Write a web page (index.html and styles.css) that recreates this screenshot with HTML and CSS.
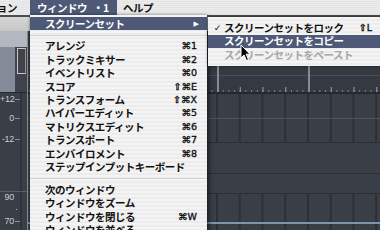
FILE: index.html
```html
<!DOCTYPE html>
<html lang="ja">
<head>
<meta charset="utf-8">
<link rel="stylesheet" href="styles.css">
</head>
<body>
<div class="screen">
  <div class="menubar">
    <span class="mb-item mb-cut">ョン</span>
    <span class="mb-item mb-active"><span>ウィンドウ</span><span class="mb-num">・1</span></span>
    <span class="mb-item mb-help">ヘルプ</span>
  </div>
  <div class="window">
    <div class="topband"></div>
    <div class="toolbar"></div>
    <div class="main">
      <div class="strip">
        <div class="strip-a"></div>
        <div class="strip-b">
          <div class="sb-left"></div>
          <div class="sb-slot"><div class="thumb"></div></div>
        </div>
        <div class="strip-c">
          <div class="scale r1"><span class="lbl">+12</span><span class="tick"></span></div>
          <div class="scale r2"><span class="lbl">0</span><span class="tick"></span></div>
          <div class="scale r3"><span class="lbl">-12</span><span class="tick"></span></div>
          <div class="hline"></div>
          <div class="scale r4"><span class="lbl">90</span></div>
          <div class="dot"></div>
          <div class="scale r5"><span class="lbl">70</span><span class="tick"></span></div>
        </div>
      </div>
      <div class="vsep"></div>
      <div class="arrange">
        <div class="arr-top"></div>
        <div class="ruler"></div>
        <div class="lane grid lane1"></div>
        <div class="lane grid lane2"></div>
        <div class="lane lane3"></div>
        <div class="lane lane4"></div>
        <div class="lane grid lane5"><div class="blue-line"></div></div>
      </div>
    </div>
  </div>

  <div class="menu">
    <div class="item hl"><span>スクリーンセット</span><span class="arrow">&#9654;</span></div>
    <div class="sep"></div>
    <div class="item"><span>アレンジ</span><span class="sc">⌘1</span></div>
    <div class="item"><span>トラックミキサー</span><span class="sc">⌘2</span></div>
    <div class="item"><span>イベントリスト</span><span class="sc">⌘0</span></div>
    <div class="item"><span>スコア</span><span class="sc">⇧⌘E</span></div>
    <div class="item"><span>トランスフォーム</span><span class="sc">⇧⌘X</span></div>
    <div class="item"><span>ハイパーエディット</span><span class="sc">⌘5</span></div>
    <div class="item"><span>マトリクスエディット</span><span class="sc">⌘6</span></div>
    <div class="item"><span>トランスポート</span><span class="sc">⌘7</span></div>
    <div class="item"><span>エンバイロメント</span><span class="sc">⌘8</span></div>
    <div class="item"><span>ステップインプットキーボード</span></div>
    <div class="sep"></div>
    <div class="item"><span>次のウィンドウ</span></div>
    <div class="item"><span>ウィンドウをズーム</span></div>
    <div class="item"><span>ウィンドウを閉じる</span><span class="sc">⌘W</span></div>
    <div class="item"><span>ウィンドウを並べる</span></div>
  </div>

  <div class="submenu">
    <div class="sitem"><span class="check">✓</span><span class="stext">スクリーンセットをロック</span><span class="sc">⇧L</span></div>
    <div class="sitem hl"><span class="check"></span><span class="stext">スクリーンセットをコピー</span></div>
    <div class="sitem dis"><span class="check"></span><span class="stext">スクリーンセットをペースト</span></div>
  </div>

  <svg class="cursor" width="12" height="18" viewBox="0 0 12 18">
    <path d="M1 1 L1 14 L4 11 L6.5 16.5 L8.5 15.6 L6.1 10.2 L10 10.2 Z" fill="#000" stroke="#fff" stroke-width="1"/>
  </svg>
</div>
</body>
</html>
```

FILE: styles.css
```css
html, body {
  margin: 0;
  padding: 0;
}
body {
  width: 380px;
  height: 230px;
  overflow: hidden;
  font-family: "Noto Sans CJK JP", sans-serif;
}
.screen {
  position: relative;
  width: 380px;
  height: 230px;
  overflow: hidden;
}

/* Menu bar */
.menubar {
  height: 15px;
  display: flex;
  align-items: stretch;
  background: repeating-linear-gradient(#ececec 0 1px, #e4e4e4 1px 2px);
  font-size: 10.5px;
  letter-spacing: -0.5px;
  font-weight: 700;
  color: #111;
  white-space: nowrap;
}
.mb-item {
  display: flex;
  align-items: center;
  line-height: 15px;
}
.mb-cut {
  margin-left: -3px;
  width: 33px;
}
.mb-active {
  width: 80px;
  padding-left: 7px;
  background: #4d5976;
  color: #fff;
}
.mb-num {
  margin-left: 6px;
}
.mb-help {
  margin-left: 6px;
}

/* App window */
.window {
  height: 215px;
  display: flex;
  flex-direction: column;
}
.topband {
  height: 2px;
  background: #4c4c4c;
}
.toolbar {
  height: 14px;
  background: linear-gradient(#d6d6d6, #c6c6c6);
}
.main {
  flex: 1;
  display: flex;
}
.strip {
  width: 27px;
  display: flex;
  flex-direction: column;
}
.strip-a {
  height: 16px;
  background: #b3b7bf;
}
.strip-b {
  height: 45px;
  display: flex;
}
.sb-left {
  flex: 1;
  background: #848b98;
}
.sb-slot {
  width: 9px;
  background: #3e424b;
  padding: 1px 1px 0 2px;
}
.thumb {
  height: 24px;
  border: 1px solid #c4c6ca;
  border-right-color: #8e9198;
}
.strip-c {
  flex: 1;
  background: linear-gradient(to right, transparent 20px, #30333a 20px 22px, transparent 22px), #3a3e46;
  border-top: 1px solid #25282d;
  font-family: "Liberation Sans", sans-serif;
  font-size: 9px;
  color: #c8ccd3;
}
.scale {
  display: flex;
  align-items: center;
  height: 12px;
}
.lbl {
  width: 14px;
  text-align: right;
  letter-spacing: -0.3px;
}
.tick {
  width: 5px;
  height: 1px;
  margin-left: 1px;
  background: #8c9099;
}
.r2 { margin-top: 7px; }
.r3 { margin-top: 9px; }
.hline {
  margin-top: 46px;
  height: 1px;
  background: #5a5e66;
}
.r4 { height: 10px; }
.dot {
  margin: 7px 0 0 16px;
  width: 1px;
  height: 1px;
  background: #b0b4ba;
}
.r5 { height: 10px; margin-top: 6px; }
.vsep {
  width: 1px;
  background: #8a8d92;
}

/* Arrange */
.arrange {
  flex: 1;
  display: flex;
  flex-direction: column;
  background: #363a42;
}
.arr-top {
  height: 35px;
}
.ruler {
  height: 26px;
  border-bottom: 2px solid #25282d;
  background-color: #353941;
  background-image:
    linear-gradient(to right, #868b93 0 2px, transparent 2px),
    linear-gradient(to right, #9a9ea6 0 1px, transparent 1px),
    linear-gradient(to right, #80848c 0 1px, transparent 1px),
    linear-gradient(#4a4e57, #4a4e57);
  background-size: 91px 100%, 22.75px 5px, 5.6875px 2px, 100% 1px;
  background-position: 7px 0, 7px 100%, 7px 100%, 0 9px;
  background-repeat: repeat-x, repeat-x, repeat-x, no-repeat;
}
.lane {
  background-color: #3a3e47;
  border-bottom: 1px solid #2b2e34;
}
.grid {
  background-image: linear-gradient(to right, #2c2f35 0 2px, transparent 2px);
  background-size: 22.75px 100%;
  background-position: 6px 0;
}
.lane1 { height: 24px; border-bottom-color: #4f535c; }
.lane2 { height: 23px; }
.lane3 { height: 30px; }
.lane4 { height: 19px; }
.lane5 { flex: 1; border-bottom: 0; }
.blue-line {
  margin-top: 28px;
  height: 2px;
  background: #7d93ae;
}

/* Main menu */
.menu {
  position: absolute;
  left: 30px;
  top: 15px;
  width: 177px;
  height: 230px;
  padding-top: 2px;
  background: repeating-linear-gradient(#f4f4f4 0 2px, #ececec 2px 4px);
  box-shadow: 0 0 3px rgba(0, 0, 0, 0.45), 3px 2px 4px rgba(0, 0, 0, 0.35);
  font-size: 10.5px;
  letter-spacing: -0.5px;
  font-weight: 700;
  color: #111;
}
.item {
  height: 13.4px;
  display: flex;
  align-items: center;
  justify-content: space-between;
  padding: 0 10px 0 15px;
  line-height: 12px;
  white-space: nowrap;
}
.item.hl {
  background: #4d5976;
  color: #fff;
}
.arrow {
  font-family: "DejaVu Sans", sans-serif;
  font-size: 7px;
  letter-spacing: 0;
  margin-right: -2px;
}
.sep {
  height: 9.4px;
  display: flex;
  align-items: center;
}
.sep::after {
  content: "";
  flex: 1;
  height: 1px;
  background: #d2d2d2;
}
.sc {
  font-family: "DejaVu Sans", sans-serif;
  font-size: 9.5px;
  font-weight: 400;
  letter-spacing: 0;
  -webkit-text-stroke: 0.35px currentColor;
  color: #111;
}

/* Submenu */
.submenu {
  position: absolute;
  left: 208px;
  top: 17px;
  width: 172px;
  height: 41px;
  padding: 4px 0;
  background: repeating-linear-gradient(#f4f4f4 0 2px, #ececec 2px 4px);
  box-shadow: 0 0 3px rgba(0, 0, 0, 0.5);
  font-size: 10.5px;
  letter-spacing: -0.5px;
  font-weight: 700;
  color: #111;
}
.sitem {
  height: 13.6px;
  display: flex;
  align-items: center;
  padding: 0 8px 0 3px;
  line-height: 12px;
  white-space: nowrap;
}
.check {
  width: 13px;
  font-family: "DejaVu Sans", sans-serif;
  font-size: 9px;
  letter-spacing: 0;
  text-align: center;
}
.stext {
  flex: 1;
}
.sitem.hl {
  background: #4d5976;
  color: #fff;
}
.sitem.dis {
  color: #a6a6a6;
}

.cursor {
  position: absolute;
  left: 240px;
  top: 44px;
}
```
